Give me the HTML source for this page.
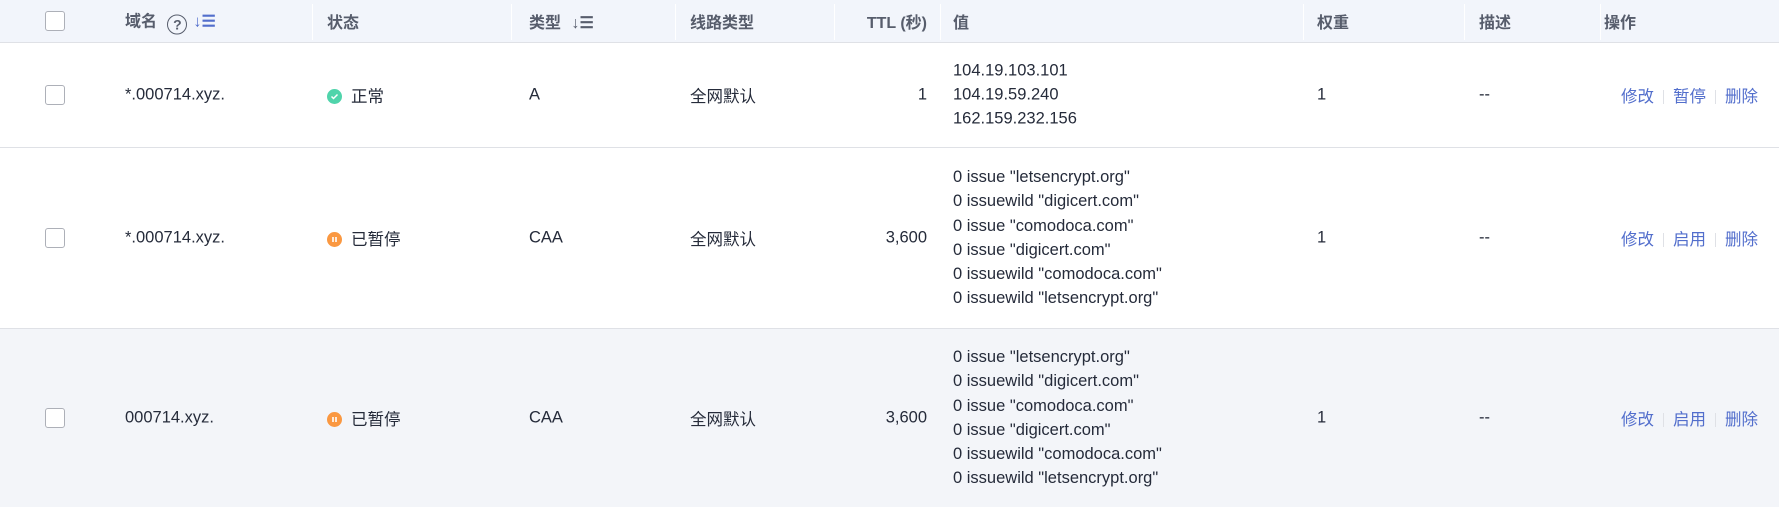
<!DOCTYPE html>
<html><head><meta charset="utf-8"><style>
body{margin:0;width:1779px;height:507px;overflow:hidden;background:#fff;font-family:"Liberation Sans","Noto Sans CJK SC",sans-serif;font-size:16.5px;color:#252b3a;}
.row{position:absolute;left:0;width:1779px;border-bottom:1px solid #dfe1e6;}
.c{position:absolute;top:50%;transform:translateY(-50%);white-space:nowrap;}
.h{background:#f2f5fb;top:0;height:42px;color:#575d6c;font-weight:bold;font-size:16px;}
.div{position:absolute;top:4px;height:36px;width:1px;background:#fff;}
.cb{position:absolute;left:45px;width:18px;height:18px;border:1px solid #adb0b8;border-radius:3px;background:#fff;top:50%;transform:translateY(-50%);}
.v{line-height:24.3px;}
.a{color:#526ecc;}
.sep{display:inline-block;width:1px;height:14px;background:#dfe1e6;margin:0 9px;vertical-align:-2px;}
.ic{display:inline-block;width:15px;height:15px;border-radius:50%;vertical-align:-2px;margin-right:9px;position:relative;}
</style></head><body>
<div class="row h">
<div class="cb"></div>
<div class="c" style="left:125px">域名 <span style="display:inline-block;width:20px;height:20px;border:1.6px solid #575d6c;border-radius:50%;text-align:center;line-height:18px;font-size:14px;box-sizing:border-box;vertical-align:-3px;margin:0 6px">?</span><span style="color:#526ecc">↓☰</span></div>
<div class="div" style="left:312px"></div>
<div class="c" style="left:327px">状态</div>
<div class="div" style="left:511px"></div>
<div class="c" style="left:529px">类型 <span style="margin-left:6px">↓☰</span></div>
<div class="div" style="left:675px"></div>
<div class="c" style="left:690px">线路类型</div>
<div class="div" style="left:834px"></div>
<div class="c" style="right:852px">TTL (秒)</div>
<div class="div" style="left:940px"></div>
<div class="c" style="left:953px">值</div>
<div class="div" style="left:1303px"></div>
<div class="c" style="left:1317px">权重</div>
<div class="div" style="left:1464px"></div>
<div class="c" style="left:1479px">描述</div>
<div class="div" style="left:1600px"></div>
<div class="c" style="left:1604px">操作</div>
</div>

<div class="row" style="top:42px;height:105px">
<div class="cb"></div>
<div class="c" style="left:125px">*.000714.xyz.</div>
<div class="c" style="left:327px"><span class="ic" style="background:#50d4ab"><svg width="15" height="15" style="position:absolute;left:0;top:0"><path d="M4.5 7.5l2 2 4-4" stroke="#fff" stroke-width="1.5" fill="none"/></svg></span>正常</div>
<div class="c" style="left:529px">A</div>
<div class="c" style="left:690px">全网默认</div>
<div class="c" style="right:852px">1</div>
<div class="c v" style="left:953px">104.19.103.101<br>104.19.59.240<br>162.159.232.156</div>
<div class="c" style="left:1317px">1</div>
<div class="c" style="left:1479px">--</div>
<div class="c a" style="left:1621px">修改<span class="sep"></span>暂停<span class="sep"></span>删除</div>
</div>

<div class="row" style="top:148px;height:180px">
<div class="cb"></div>
<div class="c" style="left:125px">*.000714.xyz.</div>
<div class="c" style="left:327px"><span class="ic" style="background:#fa9841"><svg width="15" height="15" style="position:absolute;left:0;top:0"><path d="M6 5v5M9 5v5" stroke="#fff" stroke-width="1.6"/></svg></span>已暂停</div>
<div class="c" style="left:529px">CAA</div>
<div class="c" style="left:690px">全网默认</div>
<div class="c" style="right:852px">3,600</div>
<div class="c v" style="left:953px">0 issue "letsencrypt.org"<br>0 issuewild "digicert.com"<br>0 issue "comodoca.com"<br>0 issue "digicert.com"<br>0 issuewild "comodoca.com"<br>0 issuewild "letsencrypt.org"</div>
<div class="c" style="left:1317px">1</div>
<div class="c" style="left:1479px">--</div>
<div class="c a" style="left:1621px">修改<span class="sep"></span>启用<span class="sep"></span>删除</div>
</div>

<div class="row" style="top:329px;height:178px;background:#f3f5f9;border-bottom:none">
<div class="cb"></div>
<div class="c" style="left:125px">000714.xyz.</div>
<div class="c" style="left:327px"><span class="ic" style="background:#fa9841"><svg width="15" height="15" style="position:absolute;left:0;top:0"><path d="M6 5v5M9 5v5" stroke="#fff" stroke-width="1.6"/></svg></span>已暂停</div>
<div class="c" style="left:529px">CAA</div>
<div class="c" style="left:690px">全网默认</div>
<div class="c" style="right:852px">3,600</div>
<div class="c v" style="left:953px">0 issue "letsencrypt.org"<br>0 issuewild "digicert.com"<br>0 issue "comodoca.com"<br>0 issue "digicert.com"<br>0 issuewild "comodoca.com"<br>0 issuewild "letsencrypt.org"</div>
<div class="c" style="left:1317px">1</div>
<div class="c" style="left:1479px">--</div>
<div class="c a" style="left:1621px">修改<span class="sep"></span>启用<span class="sep"></span>删除</div>
</div>
</body></html>
